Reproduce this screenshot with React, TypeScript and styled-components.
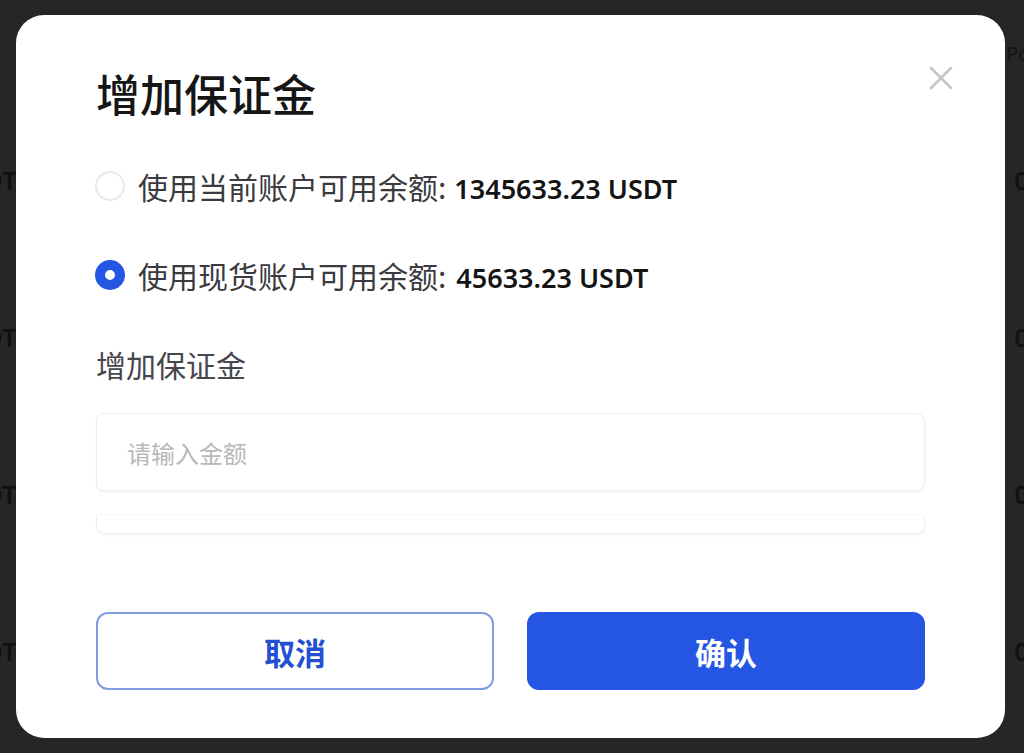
import styled, { createGlobalStyle } from 'styled-components';

const GlobalStyle = createGlobalStyle`
  html, body {
    margin: 0;
    padding: 0;
    background: #262626;
    font-family: "Noto Sans", "Noto Sans CJK SC", sans-serif;
  }
  #root {
    width: 1024px;
    height: 753px;
    overflow: hidden;
    position: relative;
  }
`;

const sources = [
  { id: 'cur', label: '使用当前账户可用余额:', amount: '1345633.23 USDT', gap: 8 },
  { id: 'spot', label: '使用现货账户可用余额:', amount: '45633.23 USDT', gap: 10 },
];

const App = () => {
  const selected = 'spot';
  return (
    <>
      <GlobalStyle />
      <Page>
        <PageHeader>Pos</PageHeader>
        {[0, 1, 2, 3].map((i) => (
          <PageRow key={i}>
            <span>USDT</span>
            <span>0.00</span>
          </PageRow>
        ))}
      </Page>
      <Modal>
        <CloseButton aria-label="close">
          <svg width="24" height="24" viewBox="0 0 24 24">
            <path d="M2 2 L22 22 M22 2 L2 22" stroke="#c6c6c6" strokeWidth="2.6" strokeLinecap="round" />
          </svg>
        </CloseButton>
        <Title>增加保证金</Title>
        <Options>
          {sources.map((s) => (
            <Option key={s.id}>
              <Radio $checked={s.id === selected} />
              <OptionLabel>
                {s.label}
                <Amount $gap={s.gap}>{s.amount}</Amount>
              </OptionLabel>
            </Option>
          ))}
        </Options>
        <FieldLabel>增加保证金</FieldLabel>
        <Input placeholder="请输入金额" />
        <ExtraBox />
        <Actions>
          <Button $variant="outline">取消</Button>
          <Button $variant="primary">确认</Button>
        </Actions>
      </Modal>
    </>
  );
};
export default App;

const Page = styled.div`
  display: flex;
  flex-direction: column;
  padding-top: 40px;
  font-family: "Noto Sans", sans-serif;
  font-size: 26px;
  font-weight: 600;
  color: #111111;
`;

const PageHeader = styled.div`
  align-self: flex-end;
  margin-right: -16px;
  font-size: 20px;
  font-weight: 400;
  color: #141414;
  height: 122px;
`;

const PageRow = styled.div`
  display: flex;
  justify-content: space-between;
  height: 157px;
  margin: 0 -42px 0 -50px;
`;

const Modal = styled.div`
  position: absolute;
  left: 16px;
  top: 15px;
  width: 989px;
  height: 723px;
  box-sizing: border-box;
  background: #ffffff;
  border-radius: 28px;
  padding: 48px 80px 48px;
  display: flex;
  flex-direction: column;
  font-family: "Noto Sans", "Noto Sans CJK SC", sans-serif;
`;

const CloseButton = styled.button`
  position: absolute;
  top: 51px;
  right: 52px;
  width: 24px;
  height: 24px;
  padding: 0;
  border: none;
  background: none;
  display: flex;
`;

const Title = styled.h1`
  margin: 0;
  font-family: "Noto Sans CJK SC", sans-serif;
  font-size: 44px;
  line-height: 60px;
  font-weight: 500;
  color: #161616;
`;

const Options = styled.div`
  display: flex;
  flex-direction: column;
  gap: 49px;
  margin-top: 43px;
`;

const Option = styled.label`
  display: flex;
  align-items: center;
  height: 40px;
  gap: 13px;
  margin-left: -1px;
`;

const Radio = styled.span<{ $checked: boolean }>`
  width: 30px;
  height: 30px;
  flex-shrink: 0;
  box-sizing: border-box;
  border-radius: 50%;
  border: ${({ $checked }) => ($checked ? '10px solid #2456e3' : '2px solid #e9e9e9')};
  background: #ffffff;
`;

const OptionLabel = styled.span`
  font-family: "Noto Sans CJK SC", sans-serif;
  font-size: 30px;
  font-weight: 400;
  color: #3a3a40;
  white-space: pre;
`;

const Amount = styled.span<{ $gap: number }>`
  margin-left: ${({ $gap }) => $gap}px;
  font-family: "Noto Sans", sans-serif;
  font-size: 27px;
  font-weight: 600;
  color: #141414;
`;

const FieldLabel = styled.div`
  margin-top: 49px;
  font-family: "Noto Sans CJK SC", sans-serif;
  font-size: 30px;
  line-height: 40px;
  color: #46464e;
`;

const Input = styled.input`
  margin-top: 29px;
  height: 78px;
  box-sizing: border-box;
  border: 1px solid #ededed;
  border-radius: 8px;
  box-shadow: 0 2px 3px rgba(0, 0, 0, 0.04);
  padding: 0 30px;
  font-family: "Noto Sans CJK SC", sans-serif;
  font-size: 24px;
  outline: none;
  &::placeholder {
    color: #b8b8b8;
  }
`;

const ExtraBox = styled.div`
  margin-top: 23px;
  height: 18px;
  border: 1px solid #efefef;
  border-top-color: #f6f6f6;
  border-radius: 2px 2px 8px 8px;
  box-shadow: 0 2px 3px rgba(0, 0, 0, 0.04);
`;

const Actions = styled.div`
  display: grid;
  grid-template-columns: 1fr 1fr;
  gap: 33px;
  margin-top: auto;
`;

const Button = styled.button<{ $variant: 'outline' | 'primary' }>`
  height: 78px;
  border-radius: 12px;
  font-family: "Noto Sans CJK SC", sans-serif;
  font-size: 31px;
  font-weight: 700;
  border: 2px solid ${({ $variant }) => ($variant === 'primary' ? '#2456e3' : '#7e9de0')};
  background: ${({ $variant }) => ($variant === 'primary' ? '#2456e3' : '#ffffff')};
  color: ${({ $variant }) => ($variant === 'primary' ? '#ffffff' : '#2350d2')};
`;
